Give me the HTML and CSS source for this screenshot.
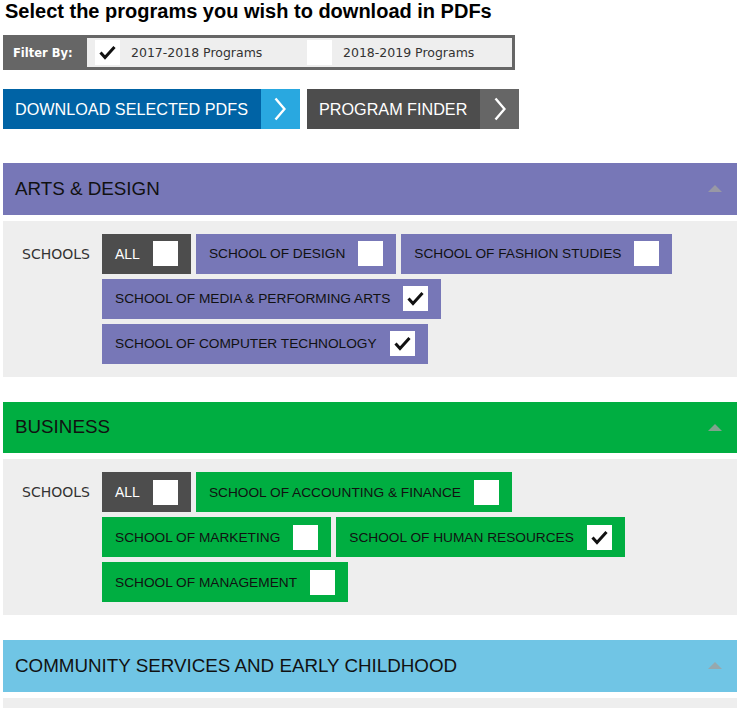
FILE: index.html
```html
<!DOCTYPE html>
<html lang="en">
<head>
<meta charset="utf-8">
<title>Select programs</title>
<link rel="stylesheet" href="styles.css">
</head>
<body>
<h1 class="title">Select the programs you wish to download in PDFs</h1>

<div class="filter">
  <span class="filter-label">Filter By:</span>
  <div class="filter-options">
    <label class="opt"><span class="box"><svg viewBox="0 0 25 25" width="25" height="25"><polyline points="5.5,12.5 10,17.5 19.5,7" fill="none" stroke="#111" stroke-width="3"/></svg></span>2017-2018 Programs</label>
    <label class="opt opt-last"><span class="box"></span>2018-2019 Programs</label>
  </div>
</div>

<div class="actions">
  <a class="btn btn-blue" href="#"><span class="btn-text">DOWNLOAD SELECTED PDFS</span><span class="btn-arrow"><svg viewBox="0 0 12 24" width="12" height="24"><polyline points="1.5,1.5 10.5,12 1.5,22.5" fill="none" stroke="#fff" stroke-width="2.4"/></svg></span></a>
  <a class="btn btn-dark" href="#"><span class="btn-text">PROGRAM FINDER</span><span class="btn-arrow"><svg viewBox="0 0 12 24" width="12" height="24"><polyline points="1.5,1.5 10.5,12 1.5,22.5" fill="none" stroke="#fff" stroke-width="2.4"/></svg></span></a>
</div>

<section class="cat cat-arts">
  <div class="cat-head"><h2>ARTS &amp; DESIGN</h2><span class="caret"></span></div>
  <div class="cat-body">
    <span class="schools">SCHOOLS</span>
    <div class="chips">
      <div class="chip chip-all">ALL<span class="box"></span></div>
      <div class="chip">SCHOOL OF DESIGN<span class="box"></span></div>
      <div class="chip">SCHOOL OF FASHION STUDIES<span class="box"></span></div>
      <div class="chip">SCHOOL OF MEDIA &amp; PERFORMING ARTS<span class="box"><svg viewBox="0 0 25 25" width="25" height="25"><polyline points="5.5,12.5 10,17.5 19.5,7" fill="none" stroke="#111" stroke-width="3"/></svg></span></div>
      <div class="chip">SCHOOL OF COMPUTER TECHNOLOGY<span class="box"><svg viewBox="0 0 25 25" width="25" height="25"><polyline points="5.5,12.5 10,17.5 19.5,7" fill="none" stroke="#111" stroke-width="3"/></svg></span></div>
    </div>
  </div>
</section>

<section class="cat cat-business">
  <div class="cat-head"><h2>BUSINESS</h2><span class="caret"></span></div>
  <div class="cat-body">
    <span class="schools">SCHOOLS</span>
    <div class="chips">
      <div class="chip chip-all">ALL<span class="box"></span></div>
      <div class="chip">SCHOOL OF ACCOUNTING &amp; FINANCE<span class="box"></span></div>
      <div class="chip">SCHOOL OF MARKETING<span class="box"></span></div>
      <div class="chip">SCHOOL OF HUMAN RESOURCES<span class="box"><svg viewBox="0 0 25 25" width="25" height="25"><polyline points="5.5,12.5 10,17.5 19.5,7" fill="none" stroke="#111" stroke-width="3"/></svg></span></div>
      <div class="chip">SCHOOL OF MANAGEMENT<span class="box"></span></div>
    </div>
  </div>
</section>

<section class="cat cat-community">
  <div class="cat-head"><h2>COMMUNITY SERVICES AND EARLY CHILDHOOD</h2><span class="caret"></span></div>
  <div class="cat-body cat-body-collapsed"></div>
</section>
</body>
</html>
```

FILE: styles.css
```css
html, body {
  margin: 0;
  padding: 0;
  background: #fff;
}
body {
  padding: 0 5px 0 3px;
  font-family: "Liberation Sans", Arial, sans-serif;
  color: #111;
}
.title {
  margin: 0 0 0 2px;
  font-size: 20px;
  line-height: 23px;
  font-weight: bold;
  color: #000;
}
.filter {
  margin-top: 12px;
  display: flex;
  width: 506px;
  height: 29px;
  border: 3px solid #666;
  background: #666;
}
.filter-label {
  flex: none;
  width: 74px;
  padding-left: 7px;
  display: flex;
  align-items: center;
  font-family: "DejaVu Sans", Verdana, sans-serif;
  font-size: 11.5px;
  font-weight: bold;
  color: #fff;
}
.filter-options {
  flex: 1;
  min-width: 0;
  display: flex;
  align-items: center;
  padding-left: 8px;
  background: #eee;
}
.opt {
  flex: none;
  width: 212px;
  display: flex;
  align-items: center;
  gap: 11px;
  font-family: "DejaVu Sans", Verdana, sans-serif;
  font-size: 12.5px;
  color: #333;
}
.opt-last {
  width: auto;
}
.box {
  flex: none;
  width: 25px;
  height: 25px;
  background: #fff;
  display: block;
}
.box svg {
  display: block;
}
.actions {
  margin-top: 19px;
  display: flex;
  gap: 7px;
}
.btn {
  display: flex;
  height: 40px;
  text-decoration: none;
  color: #fff;
}
.btn-text {
  display: flex;
  align-items: center;
  padding: 0 13px 0 12px;
  font-size: 16.2px;
}
.btn-arrow {
  width: 39px;
  display: flex;
  align-items: center;
  justify-content: center;
}
.btn-blue .btn-text { background: #0063a5; }
.btn-blue .btn-arrow { background: #29a8e0; }
.btn-dark .btn-text { background: #4d4d4d; }
.btn-dark .btn-arrow { background: #666; }

.cat {
  margin-top: 34px;
}
.cat + .cat {
  margin-top: 25px;
}
.cat-head {
  height: 51.5px;
  display: flex;
  align-items: center;
  justify-content: space-between;
  padding: 0 15px 0 12px;
}
.cat-head h2 {
  margin: 0;
  font-size: 18.8px;
  font-weight: normal;
  color: #111;
}
.caret {
  width: 0;
  height: 0;
  border-left: 7px solid transparent;
  border-right: 7px solid transparent;
  border-bottom: 7px solid #a0a0a0;
  opacity: 0.8;
}
.cat-arts .cat-head { background: #7777b7; }
.cat-business .cat-head { background: #00ae41; }
.cat-community .cat-head { background: #70c5e5; }
.cat-arts .chip { background: #7777b7; }
.cat-business .chip { background: #00ae41; }

.cat-body {
  margin-top: 6px;
  background: #eee;
  padding: 13px 8px 13px 19px;
  display: flex;
  align-items: flex-start;
}
.cat-body-collapsed {
  height: 40px;
}
.schools {
  width: 80px;
  flex: none;
  height: 40px;
  display: flex;
  align-items: center;
  font-family: "DejaVu Sans", Verdana, sans-serif;
  font-size: 14px;
  color: #333;
}
.chips {
  flex: 1;
  display: flex;
  flex-wrap: wrap;
  gap: 5px;
}
.chip {
  height: 40px;
  display: flex;
  align-items: center;
  gap: 13px;
  padding: 0 13px;
  font-size: 13.7px;
  color: #111;
}
.cat .chip-all {
  background: #4d4d4d;
  color: #fff;
  font-size: 14px;
  padding-right: 13px;
}
```
